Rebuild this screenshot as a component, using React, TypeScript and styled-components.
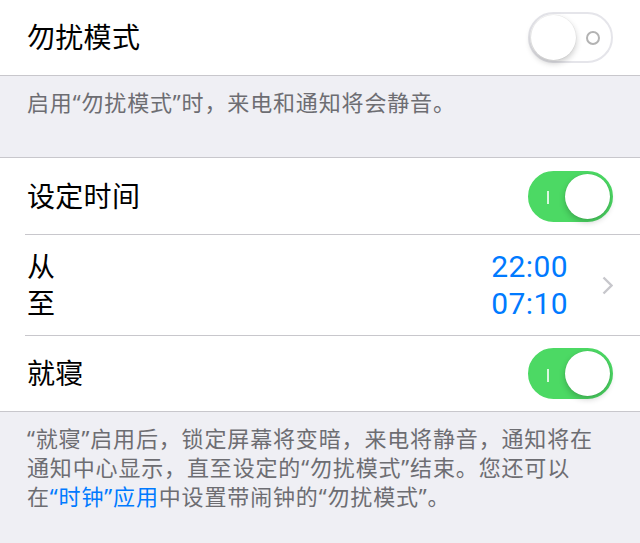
import styled, { createGlobalStyle } from "styled-components";

const GlobalStyle = createGlobalStyle`
  html, body {
    margin: 0;
    padding: 0;
    background: #efeff4;
  }
  body {
    font-family: "Noto Sans", "Noto Sans CJK SC", sans-serif;
  }
`;

const Page = styled.main`
  width: 640px;
  background: #efeff4;
  color: #000;
`;

const Group = styled.section<{ $top?: boolean }>`
  background: #fff;
  border-top: ${p => (p.$top ? "1px solid #c8c7cc" : "none")};
  border-bottom: 1px solid #c8c7cc;
`;

const Row = styled.div<{ $h: number }>`
  box-sizing: border-box;
  height: ${p => p.$h}px;
  display: flex;
  align-items: center;
  justify-content: space-between;
  padding: 0 27px;
`;

const Divider = styled.div`
  height: 1px;
  margin-left: 25px;
  background: #c8c7cc;
`;

const Title = styled.span`
  font-size: 28px;
  letter-spacing: 0.3px;
  line-height: 37px;
`;

const Stack = styled.div`
  display: flex;
  flex-direction: column;
`;

const Times = styled.div`
  display: flex;
  flex-direction: column;
  align-items: flex-end;
  font-family: Roboto, "Noto Sans", sans-serif;
  font-size: 30px;
  letter-spacing: 0.4px;
  line-height: 37px;
  color: #007aff;
`;

const Trailing = styled.div`
  display: flex;
  align-items: center;
  gap: 34px;
`;

const Footer = styled.footer<{ $h?: number }>`
  box-sizing: border-box;
  ${p => (p.$h ? `height: ${p.$h}px;` : "padding-bottom: 40px;")}
  padding-top: 12px;
  padding-left: 27px;
  font-size: 22px;
  letter-spacing: 0.85px;
  line-height: 29px;
  color: #6d6d72;
  white-space: nowrap;
`;

const Link = styled.span`
  color: #007aff;
`;

const Track = styled.div<{ $on: boolean }>`
  box-sizing: border-box;
  width: 85px;
  height: 51px;
  border-radius: 26px;
  padding: 1px;
  display: flex;
  flex-direction: ${p => (p.$on ? "row-reverse" : "row")};
  align-items: center;
  background: ${p => (p.$on ? "#4cd964" : "#fff")};
  border: 2px solid ${p => (p.$on ? "#4cd964" : "#e5e5ea")};
`;

const Knob = styled.div`
  width: 45px;
  height: 45px;
  border-radius: 50%;
  background: #fff;
  box-shadow: 0 3px 6px rgba(0, 0, 0, 0.22), 0 0 0 0.5px rgba(0, 0, 0, 0.06);
`;

const MarkZone = styled.div`
  flex: 1;
  display: flex;
  justify-content: center;
  align-items: center;
`;

const OnMark = styled.div`
  width: 2px;
  height: 13px;
  margin-top: 3px;
  background: rgba(255, 255, 255, 0.8);
`;

const OffMark = styled.div`
  box-sizing: border-box;
  width: 14px;
  height: 14px;
  border-radius: 50%;
  border: 2px solid #b3b3b3;
`;

const Switch = ({ on }: { on: boolean }) => (
  <Track $on={on}>
    <Knob />
    <MarkZone>{on ? <OnMark /> : <OffMark />}</MarkZone>
  </Track>
);

const Chevron = () => (
  <svg width="11" height="19" viewBox="0 0 11 19">
    <polyline points="1.5,1.5 9.5,9.5 1.5,17.5" fill="none" stroke="#c7c7cc" strokeWidth="2.4" />
  </svg>
);

export default function App() {
  return (
    <Page>
      <GlobalStyle />
      <Group>
        <Row $h={75}>
          <Title>勿扰模式</Title>
          <Switch on={false} />
        </Row>
      </Group>
      <Footer $h={81}>启用“勿扰模式”时，来电和通知将会静音。</Footer>
      <Group $top>
        <Row $h={76}>
          <Title>设定时间</Title>
          <Switch on />
        </Row>
        <Divider />
        <Row $h={100}>
          <Stack>
            <Title>从</Title>
            <Title>至</Title>
          </Stack>
          <Trailing>
            <Times>
              <span>22:00</span>
              <span>07:10</span>
            </Times>
            <Chevron />
          </Trailing>
        </Row>
        <Divider />
        <Row $h={75}>
          <Title>就寝</Title>
          <Switch on />
        </Row>
      </Group>
      <Footer>
        “就寝”启用后，锁定屏幕将变暗，来电将静音，通知将在
        <br />
        通知中心显示，直至设定的“勿扰模式”结束。您还可以
        <br />
        在<Link>“时钟”应用</Link>中设置带闹钟的“勿扰模式”。
      </Footer>
    </Page>
  );
}
